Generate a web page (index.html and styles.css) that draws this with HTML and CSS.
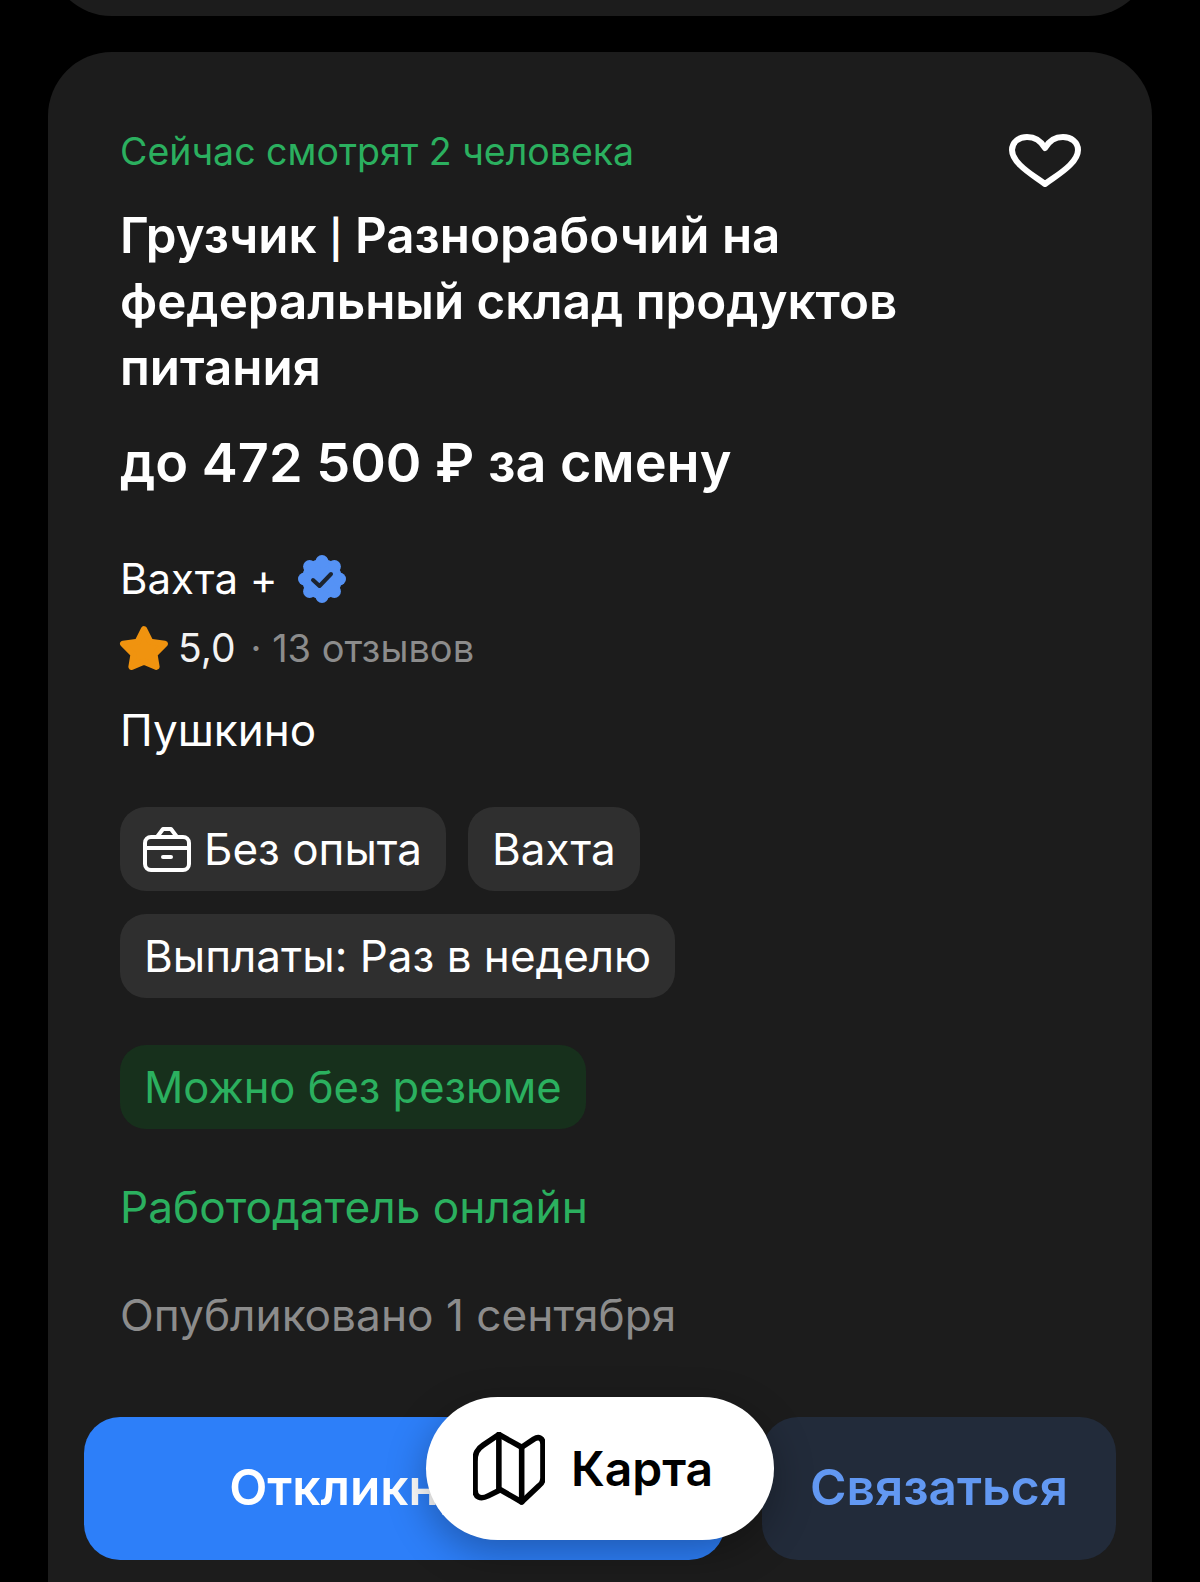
FILE: index.html
```html
<!DOCTYPE html>
<html lang="ru">
<head>
  <meta charset="UTF-8" />
  <meta name="viewport" content="width=device-width, initial-scale=1.0" />
  <title>Вакансия</title>
  <link rel="stylesheet" href="styles.css">
</head>
<body>
  <div class="prev-card"></div>

  <div class="card">
    <div class="card-body">
      <div class="watching">
        <span>Сейчас смотрят 2 человека</span>
        <svg class="heart" width="72" height="54" viewBox="0 0 72 54"><path d="M36 50 C28 44 19 39 11 31 C5 25 3 21 3 16 C3 8 10 3 18 3 C26 3 32 7 36 14 C40 7 46 3 54 3 C62 3 69 8 69 16 C69 21 67 25 61 31 C53 39 44 44 36 50 Z" fill="none" stroke="#fff" stroke-width="6" stroke-linejoin="round"/></svg>
      </div>
      <h2 class="title">Грузчик <span class="pipe">|</span> Разнорабочий на<br>федеральный склад продуктов<br>питания</h2>
      <div class="salary">до 472 500 ₽ за смену</div>

      <div class="company">
        <span>Вахта +</span>
        <svg class="badge" width="48" height="48" viewBox="0 0 48 48">
          <g fill="#5592f5">
            <circle cx="24" cy="24" r="20"/>
            <circle cx="24" cy="6.500" r="6.500"/><circle cx="36.400" cy="11.600" r="6.500"/><circle cx="41.500" cy="24" r="6.500"/><circle cx="36.400" cy="36.400" r="6.500"/>
            <circle cx="24" cy="41.500" r="6.500"/><circle cx="11.600" cy="36.400" r="6.500"/><circle cx="6.500" cy="24" r="6.500"/><circle cx="11.600" cy="11.600" r="6.500"/>
          </g>
          <path d="M15 25 L21.500 31 L33 19" fill="none" stroke="#1c2430" stroke-width="4" stroke-linecap="round" stroke-linejoin="round"/>
        </svg>
      </div>
      <div class="rating">
        <svg class="star" width="50" height="46" viewBox="0 0 48 44"><path d="M24 4 L30 16 L44 18 L34 28 L36 40 L24 35 L12 40 L14 28 L4 18 L18 16 Z" fill="#f0930f" stroke="#f0930f" stroke-width="6" stroke-linejoin="round"/></svg>
        <span class="score">5,0</span>
        <span class="reviews">· 13 отзывов</span>
      </div>
      <div class="location">Пушкино</div>

      <div class="chips">
        <span class="chip chip-icon">
          <svg width="48" height="45" viewBox="0 0 48 45" fill="none" stroke="#fff" stroke-width="4" stroke-linecap="round" stroke-linejoin="round">
            <rect x="2" y="10" width="44" height="33" rx="6"/>
            <path d="M2 21 H46"/>
            <path d="M20 30 H28"/>
            <path d="M14 10 L20 2 H28 L34 10"/>
          </svg>
          Без опыта
        </span>
        <span class="chip">Вахта</span>
        <span class="chip">Выплаты: Раз в неделю</span>
      </div>
      <div class="chips chips-green">
        <span class="chip chip-green">Можно без резюме</span>
      </div>

      <div class="online">Работодатель онлайн</div>
      <div class="published">Опубликовано 1 сентября</div>
    </div>

    <div class="card-actions">
      <button class="btn btn-apply">Откликнуться</button>
      <button class="btn btn-contact">Связаться</button>
      <button class="map-btn">
        <svg width="72" height="73" viewBox="14 13 71 72" fill="none" stroke="#000" stroke-width="5.500" stroke-linejoin="round" stroke-linecap="round">
          <path d="M39.500 15.500 L62 28 L74 20 C79 17 83 19 83 25 V58 C83 62 82 64 79 66 L62 82 L41 70 L29 76 C21 80 16 77 16 70 V42 C16 34 18 30 24 26 Z"/>
          <path d="M39.500 15.500 V70"/>
          <path d="M62 28 V82"/>
        </svg>
        Карта
      </button>
    </div>
  </div>
</body>
</html>
```

FILE: styles.css
```css
html, body { margin:0; height:1582px; overflow:hidden; }
body { background:#000; font-family:'Inter','Liberation Sans',sans-serif; color:#fff; }

.prev-card{height:76px;margin:-60px 48px 0;background:#1c1c1c;border-radius:0 0 64px 64px;}

.card{margin:36px 48px 0;height:1600px;background:#1c1c1c;border-radius:64px;position:relative;}
.card-body{padding:77px 72px 0;}

.watching{display:flex;justify-content:space-between;align-items:flex-start;font-size:37.500px;line-height:46px;color:#2bb05f;height:73px;}
.heart{margin-top:5px;margin-right:-1px;}

.title{margin:0;font-size:49.300px;line-height:66px;font-weight:600;}
.pipe{font-size:38px;line-height:0;}
.salary{margin-top:27px;font-size:54px;line-height:72px;font-weight:600;}

.company{display:flex;align-items:center;gap:20px;margin-top:56px;font-size:42px;line-height:48px;}
.rating{display:flex;align-items:center;margin-top:21px;font-size:38px;line-height:48px;}
.star{margin-left:-1px;margin-right:9px;}
.score{color:#f2f2f2;font-size:39px;}
.reviews{margin-left:15px;color:#8c8c8c;}
.location{margin-top:34px;font-size:44px;line-height:48px;}

.chips{display:flex;flex-wrap:wrap;gap:23px 22px;margin-top:53px;}
.chips-green{margin-top:47px;}
.chip{display:flex;align-items:center;gap:14px;height:84px;padding:0 24px;background:#2f2f2f;border-radius:26px;font-size:44px;white-space:nowrap;}
.chip-icon{padding:0 24px 0 23px;gap:13px;}
.chip-green{background:#17301c;color:#2bb05f;font-size:43.500px;}

.online{margin-top:54px;font-size:44.200px;line-height:48px;color:#2bb05f;}
.published{margin-top:60px;font-size:44.200px;line-height:48px;color:#8c8c8c;}

.card-actions{display:flex;gap:37px;margin-top:78px;padding:0 36px;position:relative;}
.btn{height:143px;padding:0 0 4px;border:none;border-radius:36px;font-family:inherit;font-size:49.600px;font-weight:600;}
.btn-apply{width:641px;background:#2d7ff9;color:#fff;}
.btn-contact{width:354px;background:#222b3a;color:#6298f2;}
.map-btn{position:absolute;left:378px;top:-20px;width:348px;height:143px;padding:0 14px 0 0;display:flex;align-items:center;justify-content:center;gap:26px;background:#fff;color:#000;border:none;border-radius:72px;font-family:inherit;font-size:48px;font-weight:600;box-shadow:0 12px 40px rgba(0,0,0,.3);}
```
